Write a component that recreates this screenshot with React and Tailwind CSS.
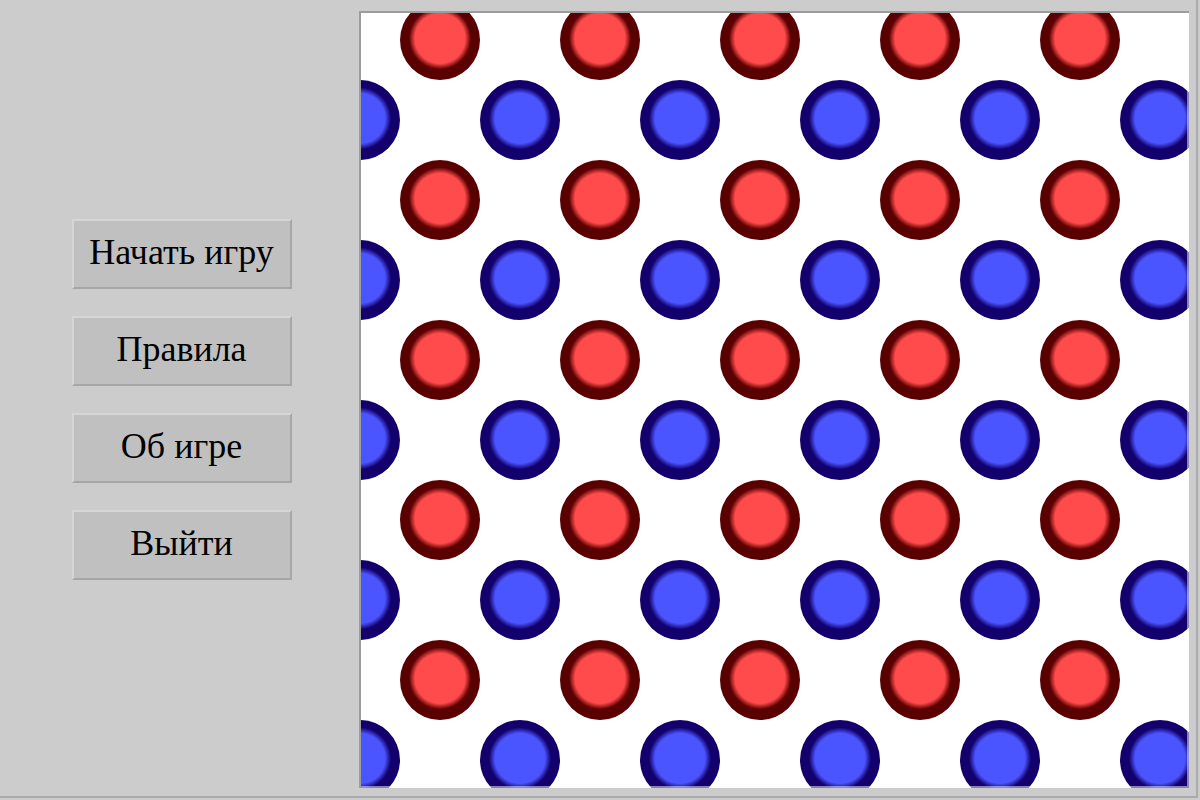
import React from 'react';

const RED_X = [440, 600, 760, 920, 1080];
const RED_Y = [40, 200, 360, 520, 680];
const BLUE_X = [360, 520, 680, 840, 1000, 1160];
const BLUE_Y = [120, 280, 440, 600, 760];

// board content starts at page (361, 13)
const OX = 361;
const OY = 13;

const pieces = [];
RED_Y.forEach((y) => RED_X.forEach((x) => pieces.push({ x, y, color: 'red' })));
BLUE_Y.forEach((y) => BLUE_X.forEach((x) => pieces.push({ x, y, color: 'blue' })));

const MenuButton = ({ children }) => (
  <button className="w-[220px] h-[70px] bg-[#c0c0c0] border-2 border-t-[#d6d6d6] border-l-[#d6d6d6] border-b-[#a6a6a6] border-r-[#a6a6a6] text-[36px] leading-none text-black font-['Liberation_Serif','Times_New_Roman',serif] flex items-center justify-center pb-[4px]">
    {children}
  </button>
);

const Piece = ({ x, y, color }) => (
  <div
    className={
      'absolute w-[80px] h-[80px] rounded-full ' +
      (color === 'red'
        ? 'bg-[radial-gradient(circle_at_50%_48%,#ff4b4b_0px,#ff4b4b_25px,#5a0000_31px)]'
        : 'bg-[radial-gradient(circle_at_50%_48%,#4b55ff_0px,#4b55ff_25px,#13006c_31px)]')
    }
    style={{ left: x - 40 - OX, top: y - 40 - OY }}
  />
);

export default function App() {
  return (
    <div className="w-[1200px] h-[800px] bg-[#cccccc] overflow-hidden">
      <div className="w-[1198px] h-[798px] border-r-2 border-b-2 border-[#ababab] flex">
        {/* Menu */}
        <div className="w-[359px] flex flex-col items-center justify-center gap-[27px] pl-[4px] pt-[3px]">
          <MenuButton>Начать игру</MenuButton>
          <MenuButton>Правила</MenuButton>
          <MenuButton>Об игре</MenuButton>
          <MenuButton>Выйти</MenuButton>
        </div>

        {/* Board */}
        <div className="mt-[11px] h-[777px] border-l-2 border-t-2 border-[#9c9c9c]">
          <div className="relative w-[828px] h-[775px] bg-white overflow-hidden">
            {pieces.map((p, i) => (
              <Piece key={i} {...p} />
            ))}
            <div className="absolute inset-0 border-r-2 border-b-2 border-white/50 pointer-events-none" />
          </div>
        </div>
      </div>
    </div>
  );
}
